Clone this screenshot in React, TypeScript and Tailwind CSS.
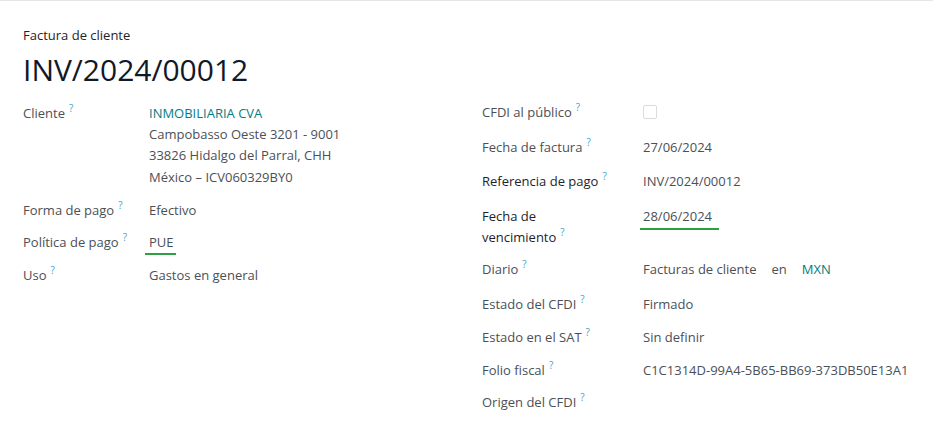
import React from "react";

const Q = () => (
  <sup className="ml-[4px] text-[10px] text-[#4aa3c4] relative -top-[6px]">?</sup>
);

function Label({ children, dark = false }: { children: React.ReactNode; dark?: boolean }) {
  return (
    <span className={dark ? "text-[#1f2328]" : "text-[#4b5057]"}>
      {children}
      <Q />
    </span>
  );
}

export default function App() {
  return (
    <div
      className="w-[933px] h-[435px] bg-white border-t border-[#e6e6e6] overflow-hidden text-[13px] leading-[21px] text-[#4b5057]"
      style={{ fontFamily: '"Open Sans", "Noto Sans", sans-serif' }}
    >
      <div className="pl-[23px] pt-[24px]">
        <div className="text-[13px] leading-[20px] text-[#1f2328]">Factura de cliente</div>
        <div className="mt-[7px] text-[30px] leading-[36px] text-[#111827]">INV/2024/00012</div>
      </div>

      <div className="flex pl-[23px] mt-[15px]">
        {/* Left column */}
        <div className="w-[459px] flex flex-col">
          <div className="flex h-[97px]">
            <div className="w-[126px]"><Label>Cliente</Label></div>
            <div className="flex flex-col">
              <span className="text-[#017e84]">INMOBILIARIA CVA</span>
              <span className="leading-[21.3px]">Campobasso Oeste 3201 - 9001</span>
              <span className="leading-[21.3px]">33826 Hidalgo del Parral, CHH</span>
              <span className="leading-[21.3px]">México – ICV060329BY0</span>
            </div>
          </div>
          <div className="flex h-[32px]">
            <div className="w-[126px]"><Label>Forma de pago</Label></div>
            <div>Efectivo</div>
          </div>
          <div className="flex h-[33px]">
            <div className="w-[126px]"><Label>Política de pago</Label></div>
            <div className="-ml-[4px] pl-[4px] w-[31px] h-[23px] border-b-2 border-[#2ea043]">PUE</div>
          </div>
          <div className="flex">
            <div className="w-[126px]"><Label>Uso</Label></div>
            <div>Gastos en general</div>
          </div>
        </div>

        {/* Right column */}
        <div className="flex flex-col -mt-[1px]">
          <div className="flex h-[35px]">
            <div className="w-[161px]"><Label>CFDI al público</Label></div>
            <div className="pt-[3px]">
              <div className="w-[14px] h-[14px] border border-[#d9dcdf] rounded-[2px] bg-white" />
            </div>
          </div>
          <div className="flex h-[34px]">
            <div className="w-[161px]"><Label>Fecha de factura</Label></div>
            <div>27/06/2024</div>
          </div>
          <div className="flex h-[35px]">
            <div className="w-[161px]"><Label dark>Referencia de pago</Label></div>
            <div>INV/2024/00012</div>
          </div>
          <div className="flex h-[53px]">
            <div className="w-[161px] flex flex-col text-[#1f2328]">
              <span>Fecha de</span>
              <span>
                vencimiento
                <Q />
              </span>
            </div>
            <div className="-ml-[3px] pl-[3px] w-[79px] h-[24px] border-b-2 border-[#2ea043]">28/06/2024</div>
          </div>
          <div className="flex h-[35px]">
            <div className="w-[161px]"><Label>Diario</Label></div>
            <div className="flex">
              <span>Facturas de cliente</span>
              <span className="ml-[15px]">en</span>
              <span className="ml-[15px] text-[#017e84]">MXN</span>
            </div>
          </div>
          <div className="flex h-[33px]">
            <div className="w-[161px]"><Label>Estado del CFDI</Label></div>
            <div>Firmado</div>
          </div>
          <div className="flex h-[33px]">
            <div className="w-[161px]"><Label>Estado en el SAT</Label></div>
            <div>Sin definir</div>
          </div>
          <div className="flex h-[32px]">
            <div className="w-[161px]"><Label>Folio fiscal</Label></div>
            <div>C1C1314D-99A4-5B65-BB69-373DB50E13A1</div>
          </div>
          <div className="flex">
            <div className="w-[161px]"><Label>Origen del CFDI</Label></div>
            <div></div>
          </div>
        </div>
      </div>
    </div>
  );
}
